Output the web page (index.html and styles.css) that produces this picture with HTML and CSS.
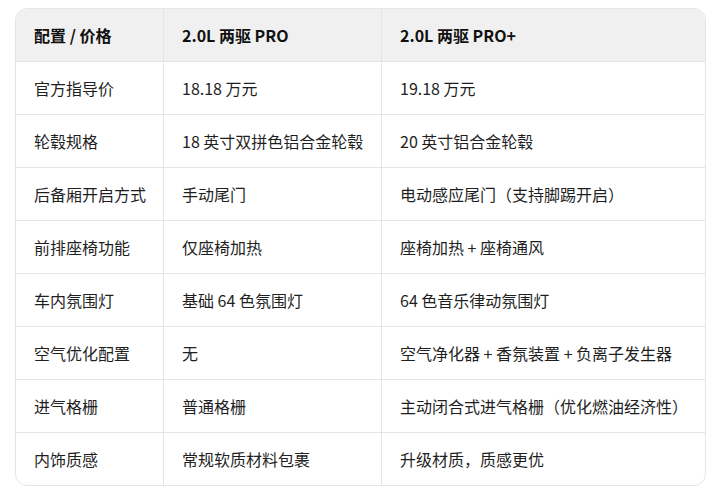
FILE: index.html
```html
<!DOCTYPE html>
<html lang="zh-CN">
<head>
<meta charset="utf-8">
<link rel="stylesheet" href="styles.css">
</head>
<body>
<div class="wrap">
<table class="spec">
<colgroup><col class="c1"><col class="c2"><col class="c3"></colgroup>
<thead>
<tr><th>配置 / 价格</th><th>2.0L 两驱 PRO</th><th>2.0L 两驱 PRO+</th></tr>
</thead>
<tbody>
<tr><td>官方指导价</td><td>18.18 万元</td><td>19.18 万元</td></tr>
<tr><td>轮毂规格</td><td>18 英寸双拼色铝合金轮毂</td><td>20 英寸铝合金轮毂</td></tr>
<tr><td>后备厢开启方式</td><td>手动尾门</td><td>电动感应尾门（支持脚踢开启）</td></tr>
<tr><td>前排座椅功能</td><td>仅座椅加热</td><td>座椅加热 + 座椅通风</td></tr>
<tr><td>车内氛围灯</td><td>基础 64 色氛围灯</td><td>64 色音乐律动氛围灯</td></tr>
<tr><td>空气优化配置</td><td>无</td><td>空气净化器 + 香氛装置 + 负离子发生器</td></tr>
<tr><td>进气格栅</td><td>普通格栅</td><td>主动闭合式进气格栅（优化燃油经济性）</td></tr>
<tr><td>内饰质感</td><td>常规软质材料包裹</td><td>升级材质，质感更优</td></tr>
</tbody>
</table>
</div>
</body>
</html>
```
FILE: styles.css
```css
html, body { margin: 0; padding: 0; background: #fff; }
body {
  font-family: "Noto Sans CJK SC", sans-serif;
  font-size: 16px;
  color: #1f1f1f;
}
.wrap {
  padding: 8px 13px 0 15px;
}
.spec {
  width: 691px;
  border-collapse: separate;
  border-spacing: 0;
  border: 1px solid #e5e5e5;
  border-radius: 12px;
  overflow: hidden;
  table-layout: fixed;
}
.c1 { width: 148px; }
.c2 { width: 218px; }
.c3 { width: auto; }
.spec th, .spec td {
  text-align: left;
  padding: 0 18px;
  height: 52px;
  border-bottom: 1px solid #e5e5e5;
  border-right: 1px solid #e5e5e5;
  line-height: 20px;
  white-space: nowrap;
}
.spec th:last-child, .spec td:last-child { border-right: none; }
.spec tbody tr:last-child td { border-bottom: none; }
.spec th {
  background: #f0f0f0;
  font-weight: 700;
  color: #111;
}
```
